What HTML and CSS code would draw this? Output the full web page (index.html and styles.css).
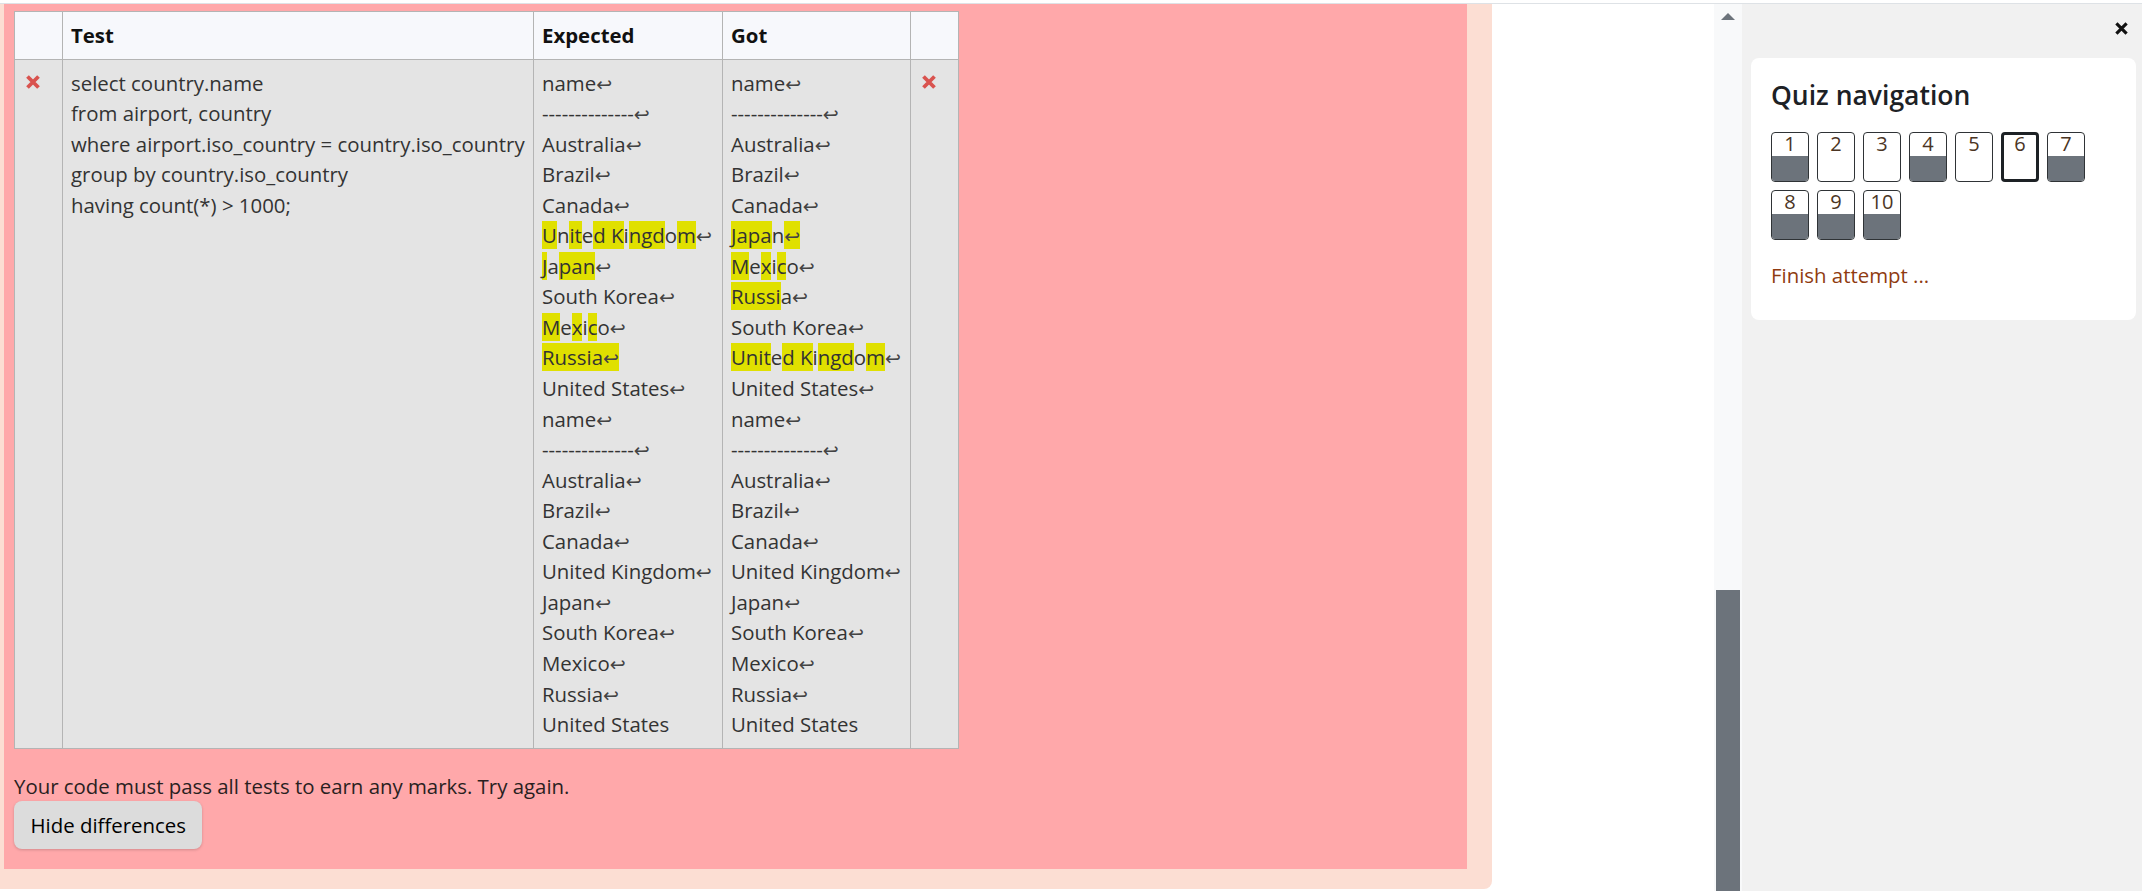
FILE: index.html
```html
<!DOCTYPE html>
<html lang="en">
<head>
<meta charset="utf-8">
<title>Quiz attempt</title>
<link rel="stylesheet" href="styles.css">
</head>
<body>
<div class="topline"></div>
<div class="layout">
  <main class="main">
    <div class="outcome">
      <div class="fail">
        <table class="results">
          <colgroup>
            <col class="c-icon"><col class="c-test"><col class="c-exp"><col class="c-got"><col class="c-icon2">
          </colgroup>
          <thead>
            <tr><th></th><th>Test</th><th>Expected</th><th>Got</th><th></th></tr>
          </thead>
          <tbody>
            <tr>
              <td><svg class="xmark" width="14" height="14" viewBox="0 0 14 14"><path d="M1.5 1.5L12.5 12.5M12.5 1.5L1.5 12.5"/></svg></td>
              <td>
                <div class="ln">select country.name</div>
                <div class="ln">from airport, country</div>
                <div class="ln">where airport.iso_country = country.iso_country</div>
                <div class="ln">group by country.iso_country</div>
                <div class="ln">having count(*) &gt; 1000;</div>
              </td>
              <td>
                <div class="ln">name<span class="nl">↩</span></div>
                <div class="ln">--------------<span class="nl">↩</span></div>
                <div class="ln">Australia<span class="nl">↩</span></div>
                <div class="ln">Brazil<span class="nl">↩</span></div>
                <div class="ln">Canada<span class="nl">↩</span></div>
                <div class="ln"><span class="hl">U</span>n<span class="hl">it</span>e<span class="hl">d K</span>i<span class="hl">ngd</span>o<span class="hl">m</span><span class="nl">↩</span></div>
                <div class="ln"><span class="hl">J</span>a<span class="hl">pan</span><span class="nl">↩</span></div>
                <div class="ln">South Korea<span class="nl">↩</span></div>
                <div class="ln"><span class="hl">M</span>e<span class="hl">x</span>i<span class="hl">c</span>o<span class="nl">↩</span></div>
                <div class="ln"><span class="hl">Russia<span class="nl">↩</span></span></div>
                <div class="ln">United States<span class="nl">↩</span></div>
                <div class="ln">name<span class="nl">↩</span></div>
                <div class="ln">--------------<span class="nl">↩</span></div>
                <div class="ln">Australia<span class="nl">↩</span></div>
                <div class="ln">Brazil<span class="nl">↩</span></div>
                <div class="ln">Canada<span class="nl">↩</span></div>
                <div class="ln">United Kingdom<span class="nl">↩</span></div>
                <div class="ln">Japan<span class="nl">↩</span></div>
                <div class="ln">South Korea<span class="nl">↩</span></div>
                <div class="ln">Mexico<span class="nl">↩</span></div>
                <div class="ln">Russia<span class="nl">↩</span></div>
                <div class="ln">United States</div>
              </td>
              <td>
                <div class="ln">name<span class="nl">↩</span></div>
                <div class="ln">--------------<span class="nl">↩</span></div>
                <div class="ln">Australia<span class="nl">↩</span></div>
                <div class="ln">Brazil<span class="nl">↩</span></div>
                <div class="ln">Canada<span class="nl">↩</span></div>
                <div class="ln"><span class="hl">Japa</span>n<span class="hl"><span class="nl">↩</span></span></div>
                <div class="ln"><span class="hl">M</span>e<span class="hl">x</span>i<span class="hl">c</span>o<span class="nl">↩</span></div>
                <div class="ln"><span class="hl">Russi</span>a<span class="nl">↩</span></div>
                <div class="ln">South Korea<span class="nl">↩</span></div>
                <div class="ln"><span class="hl">Unit</span>e<span class="hl">d K</span>i<span class="hl">ngd</span>o<span class="hl">m</span><span class="nl">↩</span></div>
                <div class="ln">United States<span class="nl">↩</span></div>
                <div class="ln">name<span class="nl">↩</span></div>
                <div class="ln">--------------<span class="nl">↩</span></div>
                <div class="ln">Australia<span class="nl">↩</span></div>
                <div class="ln">Brazil<span class="nl">↩</span></div>
                <div class="ln">Canada<span class="nl">↩</span></div>
                <div class="ln">United Kingdom<span class="nl">↩</span></div>
                <div class="ln">Japan<span class="nl">↩</span></div>
                <div class="ln">South Korea<span class="nl">↩</span></div>
                <div class="ln">Mexico<span class="nl">↩</span></div>
                <div class="ln">Russia<span class="nl">↩</span></div>
                <div class="ln">United States</div>
              </td>
              <td><svg class="xmark" width="14" height="14" viewBox="0 0 14 14"><path d="M1.5 1.5L12.5 12.5M12.5 1.5L1.5 12.5"/></svg></td>
            </tr>
          </tbody>
        </table>
        <p class="msg">Your code must pass all tests to earn any marks. Try again.</p>
        <button class="btn" type="button">Hide differences</button>
      </div>
    </div>
  </main>
  <div class="vscroll">
    <svg class="uparrow" width="14" height="7" viewBox="0 0 14 7"><polygon points="0,7 7,0 14,7"/></svg>
    <div class="thumb"></div>
  </div>
  <aside class="drawer">
    <div class="drawer-head">
      <svg class="close" width="13" height="13" viewBox="0 0 14 14"><path d="M1.5 1.5L12.5 12.5M12.5 1.5L1.5 12.5"/></svg>
    </div>
    <section class="card">
      <h5 class="card-title">Quiz navigation</h5>
      <div class="qn-grid">
        <a class="qn answered"><span class="qn-num">1</span><span class="qn-state"></span></a>
        <a class="qn"><span class="qn-num">2</span><span class="qn-state"></span></a>
        <a class="qn"><span class="qn-num">3</span><span class="qn-state"></span></a>
        <a class="qn answered"><span class="qn-num">4</span><span class="qn-state"></span></a>
        <a class="qn"><span class="qn-num">5</span><span class="qn-state"></span></a>
        <a class="qn current"><span class="qn-num">6</span><span class="qn-state"></span></a>
        <a class="qn answered"><span class="qn-num">7</span><span class="qn-state"></span></a>
        <a class="qn answered"><span class="qn-num">8</span><span class="qn-state"></span></a>
        <a class="qn answered"><span class="qn-num">9</span><span class="qn-state"></span></a>
        <a class="qn answered"><span class="qn-num">10</span><span class="qn-state"></span></a>
      </div>
      <a class="finish">Finish attempt ...</a>
    </section>
  </aside>
</div>
</body>
</html>
```
FILE: styles.css
```css
* { box-sizing: border-box; }
html, body { margin: 0; padding: 0; }
body {
  font-family: "Open Sans", "DejaVu Sans", sans-serif;
  background: #fff;
  width: 2142px;
  height: 891px;
  overflow: hidden;
  color: #212529;
}
.topline { height: 4px; border-bottom: 1px solid #dee2e6; }
.layout { display: flex; height: 887px; }
.main { flex: 1; min-width: 0; }
.outcome {
  width: 1492px;
  height: 885px;
  background: #fcded3;
  padding: 0 25px 20px 4px;
  border-radius: 0 0 8px 0;
}
.fail {
  background: #ffa8aa;
  height: 100%;
  padding: 7px 10px 20px;
}
.results {
  border-collapse: collapse;
  table-layout: fixed;
  width: 945px;
  font-size: 20.4px;
  line-height: 30.56px;
}
.c-icon { width: 48px; }
.c-test { width: 471px; }
.c-exp { width: 189px; }
.c-got { width: 188px; }
.c-icon2 { width: 48px; }
.results th, .results td {
  border: 1px solid #b4b4b4;
  padding: 8px;
  text-align: left;
  vertical-align: top;
}
.results th { background: #f7f8fc; font-weight: 700; color: #111; }
.results td { background: #e4e4e4; color: #333; }
.ln { white-space: pre; height: 30.56px; }
.hl { background: #e0e000; }
.nl { font-family: "DejaVu Sans", sans-serif; font-size: 19px; line-height: 0; color: #444; }
.xmark { display: block; margin: 7px 0 0 3px; }
.xmark path { stroke: #d9534f; stroke-width: 3.8; fill: none; }
.msg { margin: 22px 0 0; font-size: 20.4px; line-height: 30px; color: #2a1f1f; }
.btn {
  display: block;
  height: 48px;
  padding: 0 16.5px;
  font-family: "Open Sans", sans-serif;
  font-size: 20.4px;
  line-height: 30px;
  color: #000;
  background: #dcdcdc;
  border: none;
  border-radius: 8px;
  box-shadow: 0 1px 3px rgba(0,0,0,0.18);
}
.vscroll {
  width: 28px;
  background: #f8f9fa;
  display: flex;
  flex-direction: column;
  align-items: center;
  justify-content: space-between;
}
.uparrow { display: block; margin-top: 9px; }
.uparrow polygon { fill: #6c737b; }
.thumb { width: 24px; height: 301px; background: #6c737b; }
.drawer { width: 400px; background: #f1f1f1; }
.drawer-head {
  height: 54px;
  display: flex;
  justify-content: flex-end;
  padding: 18px 14px 0 0;
}
.close { display: block; }
.close path { stroke: #111; stroke-width: 3.4; fill: none; }
.card {
  margin: 0 6px 0 9px;
  background: #fff;
  border-radius: 8px;
  padding: 22px 20px 29px;
  height: 262px;
}
.card-title {
  margin: 0;
  font-size: 26.5px;
  line-height: 31.2px;
  font-weight: 600;
  color: #1d2125;
}
.qn-grid {
  display: flex;
  flex-wrap: wrap;
  gap: 8px 8px;
  margin-top: 21px;
  width: 330px;
}
.qn {
  width: 38px;
  height: 50px;
  border: 1px solid #2f3336;
  border-radius: 4px;
  display: flex;
  flex-direction: column;
  background: #fff;
}
.qn.current { border: 3px solid #1d2125; }
.qn-num {
  display: block;
  height: 23px;
  padding-top: 1px;
  line-height: 20px;
  font-size: 20px;
  text-align: center;
  color: #4b3524;
}
.qn.current .qn-num { height: 21px; padding-top: 0; line-height: 18px; }
.qn-state { flex: 1; border-radius: 0 0 3px 3px; }
.qn.answered .qn-state { background: #6c737b; }
.finish {
  display: block;
  margin-top: 20px;
  font-size: 20.4px;
  line-height: 30px;
  color: #8f3b10;
}
```
